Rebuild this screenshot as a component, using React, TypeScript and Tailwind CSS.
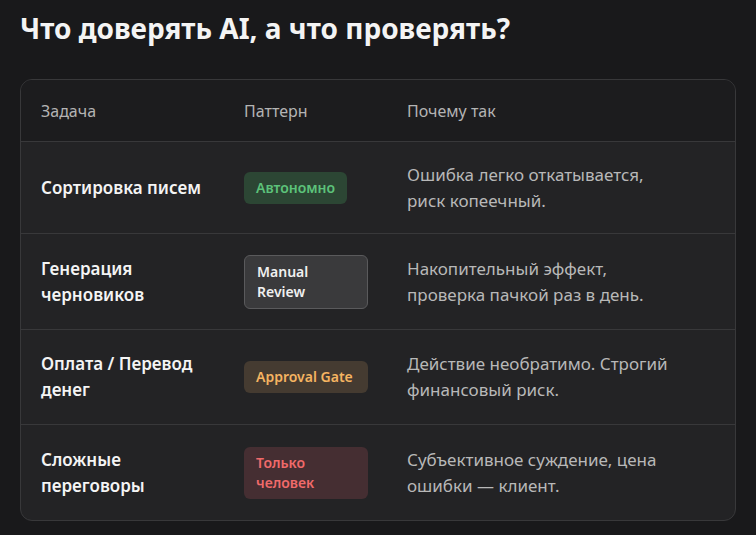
export default function App() {
  const rows = [
    { t: "Сортировка писем", b: "Автономно", c: "bg-[#2c4634] text-[#5cc27a]", r: "Ошибка легко откатывается, риск копеечный.", h: "h-[92px]" },
    { t: "Генерация черновиков", b: "Manual Review", c: "w-[124px] bg-[#3a3a3c] text-[#f0f0f0] border border-[#5a5a5c]", r: "Накопительный эффект, проверка пачкой раз в день.", h: "h-[96px]" },
    { t: "Оплата / Перевод денег", b: "Approval Gate", c: "w-[124px] bg-[#453b31] text-[#f5b461]", r: "Действие необратимо. Строгий финансовый риск.", h: "h-[95px]" },
    { t: "Сложные переговоры", b: "Только человек", c: "w-[124px] bg-[#452e32] text-[#f06a6a]", r: "Субъективное суждение, цена ошибки — клиент.", h: "h-[95px]" },
  ];
  return (
    <div className="w-[756px] h-[535px] bg-[#19191b] px-5 pt-[9px] text-white" style={{ fontFamily: '"Noto Sans", "Open Sans", sans-serif' }}>
      <h1 className="text-[28px] font-bold leading-[38px] text-[#f4f4f4]">Что доверять AI, а что проверять?</h1>
      <div className="mt-[32px] rounded-xl border border-[#38383a] overflow-hidden bg-[#232325]">
        <div className="flex items-center h-[62px] bg-[#1c1c1e] border-b border-[#38383a] px-5 text-[16px] text-[#b4b4b4]">
          <div className="w-[203px]">Задача</div>
          <div className="w-[163px]">Паттерн</div>
          <div className="flex-1">Почему так</div>
        </div>
        {rows.map((row, i) => (
          <div key={i} className={`flex items-center px-5 ${row.h} ${i < 3 ? "border-b border-[#38383a]" : ""}`}>
            <div className="w-[203px] pr-[30px] text-[17px] font-semibold leading-[26px] text-[#f4f4f4]">{row.t}</div>
            <div className="w-[163px]">
              <span className={`inline-block rounded-md px-3 py-[6px] text-[14px] font-semibold leading-[20px] ${row.c}`}>{row.b}</span>
            </div>
            <div className="flex-1 text-[17px] leading-[26px] text-[#b8b8b8] pr-8">{row.r}</div>
          </div>
        ))}
      </div>
    </div>
  );
}
